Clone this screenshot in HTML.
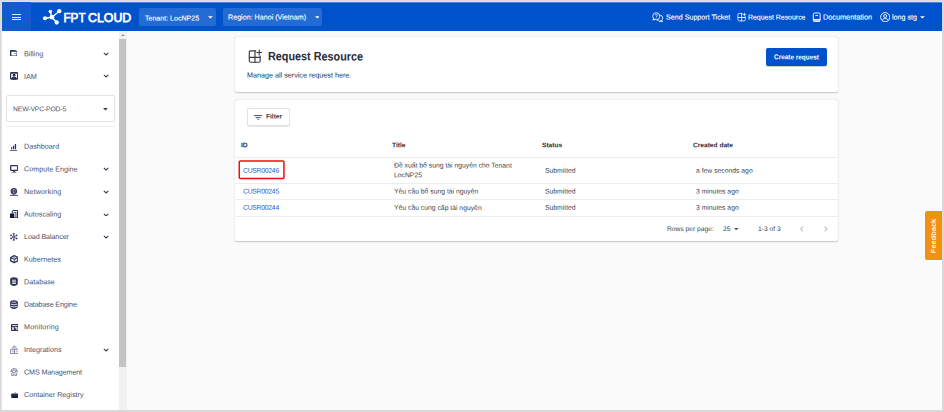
<!DOCTYPE html>
<html>
<head>
<meta charset="utf-8">
<style>
*{box-sizing:border-box;margin:0;padding:0}
html,body{width:944px;height:412px;overflow:hidden;background:#d9d9d9;font-family:"Liberation Sans",sans-serif;}
#app{position:absolute;left:2px;top:2px;width:940px;height:408px;background:#fafafa;overflow:hidden}
.abs{position:absolute}
.t{position:absolute;white-space:nowrap;line-height:1;transform-origin:0 50%}
/* top bar */
#top{position:absolute;left:0;top:0;width:940px;height:28.5px;background:#0052cc}
#ham{position:absolute;left:0;top:0;width:29px;height:28.5px;background:#105bce}
.hl{position:absolute;left:10.1px;width:9px;height:1.1px;background:#e3ecfa}
.dd{position:absolute;top:6px;height:18.3px;background:#256bd4;border-radius:2px}
.wt{color:#fff;font-size:7.15px;-webkit-text-stroke:0.12px #fff;transform:translateY(0.45px) rotate(0.05deg)}
/* sidebar */
#side{position:absolute;left:0;top:28.5px;width:117px;height:380px;background:#fff}
#sbar{position:absolute;left:117px;top:28.5px;width:7.5px;height:380px;background:#f1f1f1}
#thumb{position:absolute;left:0.4px;top:8.6px;width:6.45px;height:328px;background:#c4c4c4}
.mi{color:#4c5168;font-size:7.2px}
.chev{position:absolute;left:101.5px;width:5px;height:5px}
.ic{position:absolute;left:7.5px;width:8px;height:8px}
/* cards */
.card{position:absolute;background:#fff;border-radius:2px;box-shadow:0 0.5px 1.5px rgba(0,0,0,.22),0 0 0.5px rgba(0,0,0,.12)}
.dk{color:#2b3043}
.hd{font-weight:bold;font-size:6.6px;color:#2a2e3c}
.cell{font-size:6.8px;color:#3a3f4d}
.lnk{font-size:6.8px;color:#1b62d2}
.line{position:absolute;left:0;width:603px;height:1px;background:#ededed}
</style>
</head>
<body>
<div class="abs" style="left:1px;top:1px;width:941px;height:409px;background:#e5e2dd"></div>
<div id="app">
  <!-- TOP BAR -->
  <div id="top">
    <div class="abs" style="left:0;top:0;width:940px;height:0.7px;background:rgba(255,255,255,.28)"></div>
    <div id="ham">
      <div class="hl" style="top:12px"></div>
      <div class="hl" style="top:14.6px"></div>
      <div class="hl" style="top:17.4px"></div>
    </div>
    <!-- logo -->
    <svg class="abs" style="left:40px;top:6px" width="22" height="18" viewBox="0 0 22 18">
      <g stroke="#fff" stroke-width="1.4" stroke-linecap="round">
        <line x1="3" y1="10.3" x2="9.9" y2="9.2"/>
        <line x1="9.9" y1="9.2" x2="8.3" y2="3.6"/>
        <line x1="9.9" y1="9.2" x2="17.3" y2="3.2"/>
        <line x1="9.9" y1="9.2" x2="14.7" y2="14.5"/>
      </g>
      <g fill="#fff">
        <circle cx="3" cy="10.3" r="2.05"/>
        <circle cx="9.9" cy="9.2" r="2.35"/>
        <circle cx="8.3" cy="3.6" r="1.75"/>
        <circle cx="17.3" cy="3.2" r="2.15"/>
        <circle cx="14.7" cy="14.5" r="2.15"/>
      </g>
    </svg>
    <svg class="abs" style="left:60px;top:6px" width="72" height="20" viewBox="0 0 72 20">
      <g font-family="Liberation Sans, sans-serif" font-size="13.6" fill="#fff" stroke="#fff" stroke-width="0.75"><text x="1.5" y="14.3" textLength="22" lengthAdjust="spacingAndGlyphs">FPT</text><text x="26" y="14.3" textLength="43.3" lengthAdjust="spacingAndGlyphs">CLOUD</text></g>
    </svg>
    <!-- dropdowns -->
    <div class="dd" style="left:137.2px;width:77.1px"></div>
    <div class="t wt" style="left:143.3px;top:12px;font-size:7.05px">Tenant: LocNP25</div>
    <svg class="abs" style="left:206.2px;top:13.8px" width="4.8" height="2.8" viewBox="0 0 10 5"><path d="M0 0h10L5 5z" fill="#fff"/></svg>
    <div class="dd" style="left:220.6px;width:99.9px"></div>
    <div class="t wt" style="left:226.4px;top:12px">Region: Hanoi (Vietnam)</div>
    <svg class="abs" style="left:312.7px;top:13.8px" width="4.8" height="2.8" viewBox="0 0 10 5"><path d="M0 0h10L5 5z" fill="#fff"/></svg>
    <!-- right links -->
    <svg class="abs" style="left:650px;top:10px" width="12" height="10.5" viewBox="0 0 12 10.5" fill="none" stroke="#fff" stroke-width="0.82"><circle cx="7.7" cy="6.1" r="3.05"/><path d="M9.6 8.6L10.7 9.6H7.6"/><circle cx="4.25" cy="4.2" r="3.55" fill="#0052cc"/><path d="M1.5 6.6L0.8 8L3.2 7.6" stroke-width="0.8"/><path d="M3.1 3.3c0-1.5 2.3-1.5 2.3-.1 0 .9-1.15.9-1.15 1.9M4.25 5.9v.6" stroke-width="0.8"/></svg>
    <div class="t wt" style="left:663.9px;top:12px">Send Support Ticket</div>
    <svg class="abs" style="left:734.5px;top:9.5px" width="10" height="10" viewBox="0 0 10 10" fill="none" stroke="#fff" stroke-opacity=".88" stroke-width="0.85" stroke-linecap="round"><path d="M5.1 1.4H2.1Q0.9 1.4 0.9 2.6V7.7Q0.9 8.9 2.1 8.9H7.1Q8.3 8.9 8.3 7.7V4.8"/><path d="M0.9 5.5H8.3M4.6 1.4V8.9" stroke-width="0.95"/><path d="M7.4 1.2V3.8M6.1 2.5H8.7" stroke-width="0.9"/></svg>
    <div class="t wt" style="left:745.8px;top:12px;font-size:6.95px">Request Resource</div>
    <svg class="abs" style="left:810.4px;top:10px" width="9" height="10.4" viewBox="0 0 9 10.4" fill="none" stroke="#fff" stroke-width="0.95"><rect x="1.3" y="1" width="6.85" height="8.5" rx="1.3"/><rect x="1.4" y="7" width="6.6" height="2.4" fill="#fff" stroke="none"/><path d="M2.1 8.3H7.3" stroke="#0052cc" stroke-width="0.45"/><path d="M3.4 3.5H6" stroke-width="0.9"/></svg>
    <div class="t wt" style="left:821px;top:11px;font-size:7.3px">Documentation</div>
    <svg class="abs" style="left:878.1px;top:10px" width="10.4" height="10.4" viewBox="0 0 20 20" fill="none" stroke="#fff" stroke-width="1.8"><circle cx="10" cy="10" r="8.8"/><circle cx="10" cy="7.8" r="2.9"/><path d="M4 16c1.5-2.5 3.5-3.4 6-3.4s4.5.9 6 3.4"/></svg>
    <div class="t wt" style="left:889.8px;top:12px">long stg</div>
    <svg class="abs" style="left:918.2px;top:13.8px" width="4.8" height="2.8" viewBox="0 0 10 5"><path d="M0 0h10L5 5z" fill="#fff"/></svg>
  </div>

  <!-- SIDEBAR -->
  <div id="side">
    <div id="sidecontent">
    <svg class="abs" style="left:7.8px;top:19.4px" width="7.3" height="6.2" viewBox="0 0 7.3 6.2"><path d="M0 0.5Q0 0 0.5 0H4.8Q7.3 0.4 7.3 2.6V5.7Q7.3 6.2 6.8 6.2H0.5Q0 6.2 0 5.7z" fill="#2f3358"/><rect x="1.3" y="1.8" width="5.2" height="3.6" rx="0.4" fill="#fff"/><rect x="4" y="3.1" width="2.5" height="0.8" fill="#2f3358" opacity=".55"/></svg><div class="t mi" style="left:21.9px;top:19.5px;font-size:7.2px;transform:translateY(0.33px) rotate(0.05deg);">Billing</div><svg class="abs" style="left:100.9px;top:21.5px" width="6.2" height="3.8" viewBox="0 0 12.4 7.6" fill="none" stroke="#34385a" stroke-width="2.05"><path d="M1.6 1.7L6.2 5.9L10.8 1.7"/></svg>
    <svg class="abs" style="left:7.8px;top:41.6px" width="8.2" height="7.5" viewBox="0 0 8.2 7.5"><rect x="0" y="0" width="8.2" height="7.5" rx="1.2" fill="#2f3358"/><rect x="1.2" y="1.7" width="5.8" height="4.7" fill="#fff"/><circle cx="4.1" cy="3.3" r="1.45" fill="#2f3358"/><ellipse cx="4.1" cy="6.3" rx="2.5" ry="1.5" fill="#2f3358"/><rect x="0.6" y="6.3" width="7" height="1.2" rx="0.5" fill="#2f3358"/></svg><div class="t mi" style="left:21.9px;top:41.5px;font-size:7.2px;transform:translateY(0.88px) rotate(0.05deg);">IAM</div><svg class="abs" style="left:100.9px;top:43.8px" width="6.2" height="3.8" viewBox="0 0 12.4 7.6" fill="none" stroke="#34385a" stroke-width="2.05"><path d="M1.6 1.7L6.2 5.9L10.8 1.7"/></svg>
    <div class="abs" style="left:4.3px;top:64.5px;width:108.3px;height:27.2px;border:1px solid #e2e2e2;border-radius:2px;background:#fff"></div>
    <div class="t mi" style="left:10.5px;top:74.5px;font-size:6.8px;transform:translateY(1.3px) rotate(0.05deg);letter-spacing:-0.15px">NEW-VPC-POD-5</div>
    <svg class="abs" style="left:101px;top:77.5px" width="4.9" height="2.6" viewBox="0 0 10 5"><path d="M0 0h10L5 5z" fill="#3a3f4d"/></svg>
    <div class="abs" style="left:4px;top:95px;width:108.6px;height:1.4px;background:#ececec"></div>
    <svg class="abs" style="left:8.2px;top:113.5px" width="7.1" height="6.85" viewBox="0 0 7.1 6.85"><rect x="0" y="6.1" width="7.1" height="0.75" fill="#2f3358"/><rect x="1" y="3.2" width="1.15" height="2.1" fill="#2f3358"/><rect x="2.9" y="1.7" width="1.25" height="3.6" fill="#2f3358"/><rect x="4.8" y="0" width="1.3" height="5.3" fill="#2f3358"/></svg><div class="t mi" style="left:21.9px;top:111.5px;font-size:7.2px;transform:translateY(0.8px) rotate(0.05deg);">Dashboard</div>
    <svg class="abs" style="left:7.9px;top:134.5px" width="8.3" height="7.7" viewBox="0 0 8.3 7.7"><rect x="0.65" y="0.65" width="7" height="4.7" rx="0.7" fill="none" stroke="#2f3358" stroke-width="1.3"/><path d="M4.15 5.8V7" stroke="#2f3358" stroke-width="1.5"/><path d="M1.9 7.3h4.5" stroke="#2f3358" stroke-width="0.7"/></svg><div class="t mi" style="left:21.9px;top:134.5px;font-size:7.2px;transform:translateY(0.37px) rotate(0.05deg);">Compute Engine</div><svg class="abs" style="left:100.9px;top:136.87px" width="6.2" height="3.8" viewBox="0 0 12.4 7.6" fill="none" stroke="#34385a" stroke-width="2.05"><path d="M1.6 1.7L6.2 5.9L10.8 1.7"/></svg>
    <svg class="abs" style="left:7.9px;top:157.7px" width="7.95" height="8" viewBox="0 0 7.95 8"><circle cx="3.85" cy="3.25" r="3.2" fill="#2f3358"/><circle cx="3.85" cy="3.25" r="1.9" fill="none" stroke="#8b8ea6" stroke-width="0.5"/><path d="M3.85 1v4.5" stroke="#e8e8ee" stroke-width="0.6"/><path d="M3.85 6.3V7.4" stroke="#2f3358" stroke-width="1.1"/><path d="M0 7.4h7.95" stroke="#2f3358" stroke-width="0.85"/></svg><div class="t mi" style="left:21.9px;top:156.5px;font-size:7.2px;transform:translateY(0.93px) rotate(0.05deg);letter-spacing:0.15px">Networking</div><svg class="abs" style="left:100.9px;top:159.45px" width="6.2" height="3.8" viewBox="0 0 12.4 7.6" fill="none" stroke="#34385a" stroke-width="2.05"><path d="M1.6 1.7L6.2 5.9L10.8 1.7"/></svg>
    <svg class="abs" style="left:7.9px;top:179.6px" width="8.3" height="8.3" viewBox="0 0 8.3 8.3"><rect x="2.3" y="0.5" width="5.5" height="7.3" rx="0.7" fill="#fff" stroke="#2f3358" stroke-width="1"/><path d="M7.6 0.6V7.9" stroke="#2f3358" stroke-width="1.3"/><path d="M3.7 2.4H5.9V7.6" fill="none" stroke="#2f3358" stroke-width="0.9"/><rect x="0" y="3.5" width="4.3" height="4.8" rx="0.5" fill="#15183d"/></svg><div class="t mi" style="left:21.9px;top:179.5px;font-size:7.2px;transform:translateY(0.5px) rotate(0.05deg);">Autoscaling</div><svg class="abs" style="left:100.9px;top:182.02px" width="6.2" height="3.8" viewBox="0 0 12.4 7.6" fill="none" stroke="#34385a" stroke-width="2.05"><path d="M1.6 1.7L6.2 5.9L10.8 1.7"/></svg>
    <svg class="abs" style="left:7.9px;top:202.4px" width="7.8" height="7.8" viewBox="0 0 7.8 7.8"><g stroke="#2f3358" stroke-width="0.35"><path d="M3.8 0.8V7M1.1 2.35L6.5 5.45M6.5 2.35L1.1 5.45"/></g><g fill="#2f3358"><circle cx="3.8" cy="3.9" r="1.55"/><circle cx="3.8" cy="0.85" r="0.9"/><circle cx="3.8" cy="6.95" r="0.9"/><circle cx="1.05" cy="2.35" r="0.9"/><circle cx="6.55" cy="2.35" r="0.9"/><circle cx="1.05" cy="5.45" r="0.9"/><circle cx="6.55" cy="5.45" r="0.9"/></g><circle cx="3.8" cy="3.9" r="0.6" fill="#fff"/></svg><div class="t mi" style="left:21.9px;top:201.5px;font-size:7.2px;transform:translateY(1.06px) rotate(0.05deg);letter-spacing:-0.12px">Load Balancer</div><svg class="abs" style="left:100.9px;top:204.6px" width="6.2" height="3.8" viewBox="0 0 12.4 7.6" fill="none" stroke="#34385a" stroke-width="2.05"><path d="M1.6 1.7L6.2 5.9L10.8 1.7"/></svg>
    <svg class="abs" style="left:7.65px;top:224.7px" width="8.55" height="8.4" viewBox="0 0 8.55 8.4"><path d="M4.2 0.7L7.8 2.5V5.9L4.2 7.7L0.7 5.9V2.5z" fill="none" stroke="#2f3358" stroke-width="1.35" stroke-linejoin="round"/><path d="M0.9 2.7L4.2 4.3L7.6 2.7M4.2 4.3V7.5" fill="none" stroke="#2f3358" stroke-width="1"/><path d="M2.3 1.7L5.8 3.5V5" fill="none" stroke="#2f3358" stroke-width="0.65"/></svg><div class="t mi" style="left:21.9px;top:224.5px;font-size:7.2px;transform:translateY(0.62px) rotate(0.05deg);">Kubernetes</div>
    <svg class="abs" style="left:7.9px;top:246.9px" width="7.95" height="9.1" viewBox="0 0 7.95 9.1"><path d="M0.2 2.5v4.1c0 3.2 7.55 3.2 7.55 0V2.5z" fill="#2f3358"/><ellipse cx="3.975" cy="2.5" rx="3.78" ry="2.35" fill="#2f3358"/><path d="M2 3.2h4M2 4.8h4M2 6.4h4" stroke="#d3d5df" stroke-width="1.1" fill="none"/></svg><div class="t mi" style="left:21.9px;top:247.5px;font-size:7.2px;transform:translateY(0.19px) rotate(0.05deg);">Database</div>
    <svg class="abs" style="left:7.9px;top:269.6px" width="7.95" height="9.1" viewBox="0 0 7.95 9.1"><path d="M0.2 2.5v4.1c0 3.2 7.55 3.2 7.55 0V2.5z" fill="#2f3358"/><ellipse cx="3.975" cy="2.5" rx="3.78" ry="2.35" fill="#2f3358"/><path d="M0.9 4.1Q3.975 5.3 7.05 4.1M0.9 6.3Q3.975 7.5 7.05 6.3" stroke="#fff" stroke-width="0.8" fill="none"/><path d="M1.9 2.1Q3.975 2.7 6.05 2.1" stroke="#fff" stroke-width="0.7" fill="none"/></svg><div class="t mi" style="left:21.9px;top:269.5px;font-size:7.2px;transform:translateY(0.75px) rotate(0.05deg);letter-spacing:-0.16px">Database Engine</div>
    <svg class="abs" style="left:8.5px;top:293.2px" width="7.7" height="7.1" viewBox="0 0 7.7 7.1"><rect x="0" y="0" width="7.7" height="7.1" rx="1.1" fill="#2f3358"/><rect x="1.2" y="1.2" width="5.3" height="0.9" fill="#fff"/><rect x="1.2" y="3.2" width="1.5" height="2.7" fill="#fff"/><rect x="3.8" y="3.2" width="2.7" height="1.1" fill="#fff"/><rect x="5.2" y="4.3" width="1.3" height="1.6" fill="#fff"/></svg><div class="t mi" style="left:21.9px;top:292.5px;font-size:7.2px;transform:translateY(0.32px) rotate(0.05deg);letter-spacing:0.14px">Monitoring</div>
    <svg class="abs" style="left:7.65px;top:314.7px" width="8.55" height="9" viewBox="0 0 8.55 9"><g fill="none" stroke="#7d8094" stroke-width="0.8"><path d="M2.3 4.4V2.5L4.275 0.6L6.25 2.5V4.4"/><rect x="0.45" y="4.7" width="3.6" height="3.8"/><rect x="4.5" y="4.7" width="3.6" height="3.8"/><circle cx="4.275" cy="2.7" r="0.7"/><path d="M1.5 6.6H3M5.6 6.6H7.1" stroke-width="0.6"/></g></svg><div class="t mi" style="left:21.9px;top:314.5px;font-size:7.2px;transform:translateY(0.88px) rotate(0.05deg);">Integrations</div><svg class="abs" style="left:100.9px;top:317.48px" width="6.2" height="3.8" viewBox="0 0 12.4 7.6" fill="none" stroke="#34385a" stroke-width="2.05"><path d="M1.6 1.7L6.2 5.9L10.8 1.7"/></svg>
    <svg class="abs" style="left:7.65px;top:337.8px" width="8.15" height="7.9" viewBox="0 0 8.15 7.9"><g fill="none" stroke="#686b80" stroke-width="0.8"><path d="M0.9 3.6Q0.9 0.5 4.075 0.5Q7.25 0.5 7.25 3.6"/><circle cx="4.075" cy="3.4" r="1.55"/><path d="M0.4 3.7H2.5M5.65 3.7H7.75M2.1 4.7L1.5 7.4H3.4L4.075 6L4.75 7.4H6.65L6.05 4.7"/></g></svg><div class="t mi" style="left:21.9px;top:337.5px;font-size:7.2px;transform:translateY(0.45px) rotate(0.05deg);letter-spacing:-0.14px">CMS Management</div>
    <svg class="abs" style="left:8.7px;top:360.6px" width="7.5" height="7.2" viewBox="0 0 7.5 7.2"><rect x="0.2" y="2.5" width="7.2" height="4.6" rx="1" fill="#1b1f45"/><path d="M3.5 2.6L4.25 0.4L5 2.6z" fill="#7f829a"/><path d="M0.6 4H7" stroke="#50547a" stroke-width="0.5"/></svg><div class="t mi" style="left:21.9px;top:359.5px;font-size:7.2px;transform:translateY(1.01px) rotate(0.05deg);">Container Registry</div>
    </div><!--/sc-->
  </div>
  <div id="sbar">
    <svg class="abs" style="left:1.7px;top:3.2px" width="4" height="2.4" viewBox="0 0 10 5"><path d="M0 5h10L5 0z" fill="#8a8a8a"/></svg>
    <div id="thumb"></div>
  </div>

  <!-- MAIN -->
  <div id="main">
    <div class="card" style="left:233px;top:35.2px;width:603.1px;height:54.7px"></div>
    <svg class="abs" style="left:246px;top:47px" width="18" height="18" viewBox="0 0 18 18" fill="none" stroke="#3b3b3f" stroke-width="1.15" stroke-linecap="round" stroke-linejoin="round"><path d="M7.7 1.9H2.8Q1.3 1.9 1.3 3.4V11.7Q1.3 13.2 2.8 13.2H10.7Q12.2 13.2 12.2 11.7V7.1"/><path d="M1.3 8.3H12.2M7 1.9V13.2"/><path d="M11.2 1.1V5.9M8.8 3.5H13.7" stroke-width="1.1"/></svg>
    <div class="t " style="left:265.7px;top:48px;font-size:12px;transform:translateY(0.33px) scaleX(0.9015) rotate(0.05deg);font-weight:bold;color:#262a3b">Request Resource</div>
    <div class="t dk" style="left:244.9px;top:69px;font-size:7.2px;transform:translateY(0.44px) rotate(0.05deg);">Manage all service request here.</div>
    <div class="abs" style="left:764px;top:46.2px;width:61px;height:18.3px;background:#0052cc;border-radius:2px;box-shadow:0 0.3px 0.8px rgba(0,0,0,.2)"></div>
    <div class="t " style="left:772px;top:51px;font-size:7px;transform:translateY(0.36px) scaleX(0.918) rotate(0.05deg);color:#fff;font-weight:bold">Create request</div>
    <div class="card" style="left:233px;top:97.9px;width:603.1px;height:141px"></div>
    <div class="abs" style="left:245.2px;top:106.2px;width:42.8px;height:17.8px;border:1px solid #e2e2e2;border-radius:2px;background:#fff;box-shadow:0 0.6px 0.8px rgba(0,0,0,.10)"></div>
    <svg class="abs" style="left:251.5px;top:113px" width="8.3" height="5.4" viewBox="0 0 8.3 5.4" stroke="#34384f" stroke-width="0.9"><path d="M0 0.6h8.3M1.7 2.7h4.9M3.3 4.8h1.7"/></svg>
    <div class="t " style="left:264.1px;top:110px;font-size:6.7px;transform:translateY(1.5px) rotate(0.05deg);color:#34384f;font-weight:bold;letter-spacing:-0.05px">Filter</div>
    <div class="t hd" style="left:239.3px;top:139px;font-size:6.6px;transform:translateY(1.27px) rotate(0.05deg);">ID</div>
    <div class="t hd" style="left:390.3px;top:139px;font-size:6.6px;transform:translateY(1.27px) rotate(0.05deg);">Title</div>
    <div class="t hd" style="left:540.1px;top:139px;font-size:6.6px;transform:translateY(1.27px) rotate(0.05deg);">Status</div>
    <div class="t hd" style="left:691.3px;top:139px;font-size:6.6px;transform:translateY(1.27px) rotate(0.05deg);">Created date</div>
    <div class="line" style="left:233px;top:154.8px"></div>
    <div class="line" style="left:233px;top:180.7px"></div>
    <div class="line" style="left:233px;top:196.8px"></div>
    <div class="line" style="left:233px;top:213.5px"></div>
    <div class="t lnk" style="left:241.1px;top:164px;font-size:6.8px;transform:translateY(1.69px) rotate(0.05deg);letter-spacing:-0.25px">CUSR00246</div>
    <div class="t cell" style="left:542.9px;top:164px;font-size:6.8px;transform:translateY(1.69px) rotate(0.05deg);">Submitted</div>
    <div class="t cell" style="left:693.8px;top:164px;font-size:6.8px;transform:translateY(1.69px) rotate(0.05deg);">a few seconds ago</div>
    <div class="t lnk" style="left:241.1px;top:185px;font-size:6.8px;transform:translateY(1.39px) rotate(0.05deg);letter-spacing:-0.25px">CUSR00245</div>
    <div class="t cell" style="left:391.8px;top:185px;font-size:6.8px;transform:translateY(1.39px) rotate(0.05deg);">Yêu cầu bổ sung tài nguyên</div>
    <div class="t cell" style="left:542.9px;top:185px;font-size:6.8px;transform:translateY(1.39px) rotate(0.05deg);">Submitted</div>
    <div class="t cell" style="left:693.8px;top:185px;font-size:6.8px;transform:translateY(1.39px) rotate(0.05deg);">3 minutes ago</div>
    <div class="t lnk" style="left:241.1px;top:201px;font-size:6.8px;transform:translateY(1.84px) rotate(0.05deg);letter-spacing:-0.25px">CUSR00244</div>
    <div class="t cell" style="left:391.8px;top:201px;font-size:6.8px;transform:translateY(1.84px) rotate(0.05deg);">Yêu cầu cung cấp tài nguyên</div>
    <div class="t cell" style="left:542.9px;top:201px;font-size:6.8px;transform:translateY(1.84px) rotate(0.05deg);">Submitted</div>
    <div class="t cell" style="left:693.8px;top:201px;font-size:6.8px;transform:translateY(1.84px) rotate(0.05deg);">3 minutes ago</div>
    <div class="t cell" style="left:391.8px;top:159px;font-size:6.8px;transform:translateY(1.54px) rotate(0.05deg);">Đề xuất bổ sung tài nguyên cho Tenant</div>
    <div class="t cell" style="left:391.8px;top:169px;font-size:6.8px;transform:translateY(1.27px) rotate(0.05deg);">LocNP25</div>
    <svg class="abs" style="left:235px;top:157px" width="50" height="23" viewBox="0 0 50 23"><rect x="2.25" y="1.95" width="44.7" height="17.6" rx="1" fill="none" stroke="#f80a0e" stroke-width="1.5"/></svg>
    <div class="t cell" style="left:665.4px;top:223px;font-size:6.7px;transform:translateY(1.05px) rotate(0.05deg);">Rows per page:</div>
    <div class="t cell" style="left:720.8px;top:223px;font-size:6.7px;transform:translateY(1.05px) rotate(0.05deg);">25</div>
    <svg class="abs" style="left:732.4px;top:225.6px" width="4.6" height="2.4" viewBox="0 0 10 5"><path d="M0 0h10L5 5z" fill="#555"/></svg>
    <div class="t cell" style="left:756px;top:223px;font-size:6.7px;transform:translateY(1.05px) rotate(0.05deg);">1-3 of 3</div>
    <svg class="abs" style="left:798.4px;top:223.7px" width="3.6" height="6" viewBox="0 0 6 10" fill="none" stroke="#b9b9b9" stroke-width="1.7"><path d="M5 1L1 5l4 4"/></svg>
    <svg class="abs" style="left:822.2px;top:223.7px" width="3.6" height="6" viewBox="0 0 6 10" fill="none" stroke="#b9b9b9" stroke-width="1.7"><path d="M1 1l4 4-4 4"/></svg>
  </div><!--/main-->

  <!-- FEEDBACK -->
  <div class="abs" style="left:923.4px;top:209.2px;width:18px;height:49px;background:#f2910f;border-radius:2px 0 0 2px"></div>
  <div class="abs" style="left:923.4px;top:209.2px;width:16.6px;height:49px">
    <div class="t" style="left:8.3px;top:24.5px;color:rgba(255,255,255,.9);font-weight:bold;font-size:7.45px;transform-origin:0 0;transform:rotate(-90deg) translate(-50%,-50%)">Feedback</div>
  </div>
</div>
</body>
</html>
